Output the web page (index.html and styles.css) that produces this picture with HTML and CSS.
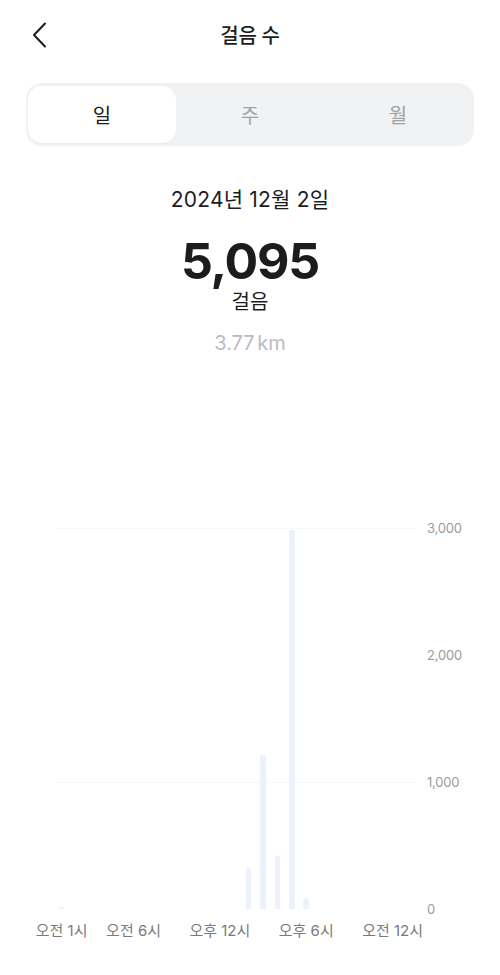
FILE: index.html
```
<!DOCTYPE html>
<html lang="ko">

<head>
  <meta charset="UTF-8">
  <meta name="viewport" content="width=device-width, initial-scale=1.0">
  <title>걸음 수</title>
  <link rel="stylesheet" href="styles.css">
</head>

<body>
  <header class="top-bar">
    <button class="back-button" type="button" aria-label="뒤로">
      <svg width="15" height="26" viewBox="0 0 15 26" fill="none">
        <path d="M13 1.5 L2 13 L13 24.5" stroke="#1c1c1e" stroke-width="2" stroke-linecap="round" stroke-linejoin="round" />
      </svg>
    </button>
    <h1 class="title">걸음 수</h1>
    <span></span>
  </header>

  <nav class="segment">
    <button class="segment-item segment-active" type="button">일</button>
    <button class="segment-item" type="button">주</button>
    <button class="segment-item" type="button">월</button>
  </nav>

  <section class="summary">
    <p class="summary-date">2024년 12월 2일</p>
    <p class="summary-count">5,095</p>
    <p class="summary-unit">걸음</p>
    <p class="summary-distance">3.77 km</p>
  </section>

  <section class="chart">
    <div class="chart-body">
      <div class="plot">
        <div class="bar" style="grid-column: 2; height: 2px;"></div>
        <div class="bar" style="grid-column: 15; height: 41px;"></div>
        <div class="bar" style="grid-column: 16; height: 154px;"></div>
        <div class="bar" style="grid-column: 17; height: 53px;"></div>
        <div class="bar" style="grid-column: 18; height: 379px;"></div>
        <div class="bar" style="grid-column: 19; height: 11px;"></div>
      </div>
      <ul class="y-axis">
        <li>3,000</li>
        <li>2,000</li>
        <li>1,000</li>
        <li>0</li>
      </ul>
    </div>
    <div class="x-axis">
      <div class="tick" style="grid-column: 2;"><span>오전 1시</span></div>
      <div class="tick" style="grid-column: 7;"><span>오전 6시</span></div>
      <div class="tick" style="grid-column: 13;"><span>오후 12시</span></div>
      <div class="tick" style="grid-column: 19;"><span>오후 6시</span></div>
      <div class="tick" style="grid-column: 25;"><span>오전 12시</span></div>
    </div>
  </section>
</body>

</html>
```

FILE: styles.css
```
* {
  margin: 0;
  padding: 0;
  box-sizing: border-box;
  font-family: Inter, 'Noto Sans CJK KR', sans-serif;
}

body {
  background: #fff;
  color: #1c1c1e;
  width: 500px;
}

button {
  background: transparent;
  border: 0;
  color: inherit;
}

.top-bar {
  height: 68px;
  display: grid;
  grid-template-columns: 1fr auto 1fr;
  align-items: center;
}

.back-button {
  justify-self: start;
  display: flex;
  margin-left: 32px;
  margin-top: 1px;
}

.title {
  font-size: 20px;
  font-weight: 500;
  letter-spacing: -0.3px;
}

.segment {
  margin: 15px 26px 0;
  height: 63px;
  padding: 3px 2px;
  background: #f1f2f4;
  border-radius: 16px;
  display: grid;
  grid-template-columns: repeat(3, 1fr);
}

.segment-item {
  font-size: 20px;
  color: #a0a2a7;
  border-radius: 14px;
}

.segment-active {
  background: #fff;
  color: #1c1c1e;
  box-shadow: 0 1px 2px rgba(0, 0, 0, 0.04);
}

.summary {
  text-align: center;
}

.summary-date {
  margin-top: 40px;
  font-size: 21px;
  line-height: 28px;
  letter-spacing: 0.2px;
}

.summary-count {
  margin-top: 19px;
  font-size: 50px;
  font-weight: 700;
  line-height: 56px;
  letter-spacing: -1.2px;
}

.summary-unit {
  font-size: 20px;
  line-height: 26px;
}

.summary-distance {
  margin-top: 15px;
  font-size: 20px;
  line-height: 26px;
  color: #b9bcc3;
  word-spacing: -3px;
}

.chart {
  margin-top: 172px;
}

.chart-body {
  display: grid;
  grid-template-columns: 375px 60px;
  column-gap: 12px;
  padding-left: 40px;
}

.plot {
  height: 381px;
  display: grid;
  grid-template-columns: repeat(25, 14.4px);
  align-items: end;
  justify-items: center;
  background-image: linear-gradient(#f6f6f6, #f6f6f6), linear-gradient(#f6f6f6, #f6f6f6);
  background-size: 360px 1px, 360px 1px;
  background-position: 15px 0, 15px 254px;
  background-repeat: no-repeat;
}

.bar {
  grid-row: 1;
  width: 5.5px;
  background: #ecf1fd;
  border-radius: 2px 2px 0 0;
}

.y-axis {
  list-style: none;
  margin: -8px 0;
  display: flex;
  flex-direction: column;
  justify-content: space-between;
  text-align: left;
  font-size: 13px;
  line-height: 16px;
  letter-spacing: -0.2px;
  color: #9b9b9b;
}

.x-axis {
  margin-top: 12px;
  padding-left: 40px;
  display: grid;
  grid-template-columns: repeat(25, 14.4px);
}

.tick {
  grid-row: 1;
  display: flex;
  justify-content: center;
  font-size: 15px;
  line-height: 20px;
  color: #7a7a7a;
  white-space: nowrap;
}
```
